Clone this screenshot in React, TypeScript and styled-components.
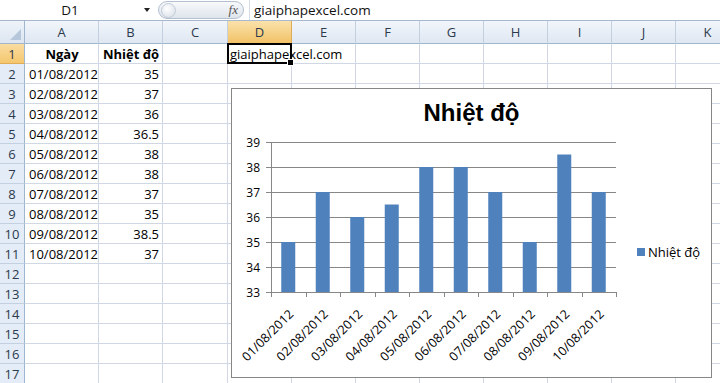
import styled, { createGlobalStyle } from "styled-components";

const GlobalStyle = createGlobalStyle`
  body {
    margin: 0;
    background: #ffffff;
    font-family: "Open Sans", "Liberation Sans", sans-serif;
  }
`;

const Page = styled.div`
  width: 720px;
  height: 383px;
  overflow: hidden;
  position: relative;
  background: #ffffff;
`;

const FormulaBar = styled.div`
  height: 21px;
  box-sizing: border-box;
  border-bottom: 1px solid #a7b8cc;
  display: flex;
  align-items: center;
  background: #ffffff;
`;

const NameBox = styled.div`
  width: 140px;
  text-align: center;
  font-size: 13.5px;
  color: #111;
`;

const NameArrow = styled.div`
  width: 0;
  height: 0;
  margin-left: 4px;
  border-left: 3.5px solid transparent;
  border-right: 3.5px solid transparent;
  border-top: 4px solid #222;
`;

const FxPill = styled.div`
  margin-left: 8px;
  width: 86px;
  height: 18px;
  box-sizing: border-box;
  border: 1px solid #b3c0d0;
  border-radius: 10px;
  background: linear-gradient(#f7f9fb, #dfe5ec);
  display: flex;
  align-items: center;
  justify-content: space-between;
  padding: 0 5px 0 2px;
`;

const PillKnob = styled.div`
  width: 13px;
  height: 13px;
  border-radius: 50%;
  background: radial-gradient(circle at 40% 35%, #ffffff, #d6dde6);
  border: 1px solid #c2ccd8;
`;

const Fx = styled.span`
  font-family: "Liberation Serif", serif;
  font-style: italic;
  font-size: 13px;
  color: #555;
`;

const FormulaText = styled.div`
  margin-left: 5px;
  padding-left: 4px;
  border-left: 1px solid #d5dde7;
  height: 20px;
  line-height: 20px;
  font-size: 13.5px;
  color: #111;
`;

const Sheet = styled.div`
  position: relative;
`;

const Row = styled.div`
  display: flex;
  height: ${(p: { $h: number }) => p.$h}px;
`;

const Corner = styled.div`
  position: relative;
  width: 25px;
  flex: none;
  box-sizing: border-box;
  border-right: 1px solid #9eb6ce;
  border-bottom: 1px solid #9eb6ce;
  background: linear-gradient(#eef3f9, #dde6f1);
  &::after {
    content: "";
    position: absolute;
    right: 3px;
    bottom: 3px;
    border-left: 11px solid transparent;
    border-bottom: 11px solid #b6c7db;
  }
`;

const ColHeader = styled.div<{ $w: number; $active?: boolean }>`
  width: ${(p) => p.$w}px;
  flex: none;
  box-sizing: border-box;
  border-right: 1px solid ${(p) => (p.$active ? "#e0ac55" : "#c3d0e0")};
  border-bottom: 1px solid ${(p) => (p.$active ? "#d9a044" : "#9eb6ce")};
  background: ${(p) =>
    p.$active ? "linear-gradient(#fae2ac, #f2c266)" : "linear-gradient(#f2f6fb, #dfe7f2)"};
  display: flex;
  align-items: center;
  justify-content: center;
  font-size: 13px;
  color: #2b3a4d;
`;

const RowHeader = styled.div<{ $active?: boolean }>`
  width: 25px;
  flex: none;
  box-sizing: border-box;
  border-right: 1px solid #9eb6ce;
  border-bottom: 1px solid ${(p) => (p.$active ? "#e0ac55" : "#c3d0e0")};
  background: ${(p) => (p.$active ? "linear-gradient(#fadca0, #f4c76e)" : "#e4ecf7")};
  display: flex;
  align-items: center;
  justify-content: center;
  font-size: 13px;
  color: #2b3a4d;
`;

const Cell = styled.div<{ $w: number; $align?: string; $bold?: boolean; $selected?: boolean }>`
  position: relative;
  width: ${(p) => p.$w}px;
  flex: none;
  box-sizing: border-box;
  border-right: 1px solid #d0d7e5;
  border-bottom: 1px solid #d0d7e5;
  display: flex;
  align-items: center;
  justify-content: ${(p) => p.$align || "flex-start"};
  padding: 0 3px 0 4px;
  font-size: 13px;
  font-weight: ${(p) => (p.$bold ? 700 : 400)};
  color: #000;
  white-space: nowrap;
  overflow: visible;
  z-index: ${(p) => (p.$selected ? 2 : 1)};
  ${(p) =>
    p.$selected &&
    `
    padding-left: 2px;
    &::after {
      content: "";
      position: absolute;
      left: -1px;
      top: -1px;
      right: -1px;
      bottom: -1px;
      border: 2px solid #000;
      pointer-events: none;
    }
    &::before {
      content: "";
      position: absolute;
      right: -3px;
      bottom: -3px;
      width: 5px;
      height: 5px;
      background: #000;
      border: 1px solid #fff;
      z-index: 3;
    }
  `}
`;

const Chart = styled.div`
  position: absolute;
  left: 231px;
  top: 67px;
  width: 481px;
  height: 290px;
  box-sizing: border-box;
  border: 1px solid #868686;
  background: #ffffff;
  z-index: 5;
  display: flex;
  flex-direction: column;
  font-family: "Open Sans", "Liberation Sans", sans-serif;
`;

const ChartTitle = styled.div`
  height: 44px;
  padding-top: 10px;
  box-sizing: border-box;
  text-align: center;
  font-family: "Liberation Sans", Arial, sans-serif;
  font-size: 24px;
  font-weight: 700;
  line-height: 28px;
  color: #000;
`;

const ChartBody = styled.div`
  flex: 1;
  display: flex;
  align-items: center;
`;

const Legend = styled.div`
  display: flex;
  align-items: center;
  gap: 3px;
  margin-left: 5px;
  padding-bottom: 6px;
  font-size: 13px;
  color: #000;
`;

const LegendKey = styled.div`
  width: 8px;
  height: 8px;
  background: #4f81bd;
`;

const columns = [
  { name: "A", w: 74 },
  { name: "B", w: 64 },
  { name: "C", w: 65 },
  { name: "D", w: 64 },
  { name: "E", w: 64 },
  { name: "F", w: 64 },
  { name: "G", w: 64 },
  { name: "H", w: 64 },
  { name: "I", w: 64 },
  { name: "J", w: 64 },
  { name: "K", w: 64 },
];

const data = [
  { date: "01/08/2012", temp: 35 },
  { date: "02/08/2012", temp: 37 },
  { date: "03/08/2012", temp: 36 },
  { date: "04/08/2012", temp: 36.5 },
  { date: "05/08/2012", temp: 38 },
  { date: "06/08/2012", temp: 38 },
  { date: "07/08/2012", temp: 37 },
  { date: "08/08/2012", temp: 35 },
  { date: "09/08/2012", temp: 38.5 },
  { date: "10/08/2012", temp: 37 },
];

const cellText = (row: number, col: number) => {
  if (row === 1) {
    if (col === 0) return { text: "Ngày", align: "center", bold: true };
    if (col === 1) return { text: "Nhiệt độ", align: "center", bold: true };
    if (col === 3) return { text: "giaiphapexcel.com" };
    return null;
  }
  const d = data[row - 2];
  if (!d) return null;
  if (col === 0) return { text: d.date };
  if (col === 1) return { text: String(d.temp), align: "flex-end" };
  return null;
};

// plot geometry (svg coordinates)
const AX = 39;
const RIGHT = 384;
const TOP = 9;
const UNIT = 25;
const BOTTOM = TOP + UNIT * 6;
const STEP = (RIGHT - AX) / data.length;
const BAR_W = 14;
const yOf = (v: number) => TOP + (39 - v) * UNIT;

const Plot = () => (
  <svg width={400} height={244} viewBox="0 0 400 244">
    {[39, 38, 37, 36, 35, 34, 33].map((v) => (
      <g key={v}>
        <line x1={AX - 5} x2={v === 33 ? AX : RIGHT} y1={yOf(v) + 0.5} y2={yOf(v) + 0.5} stroke="#878787" />
        <text x={28} y={yOf(v) + 4.5} fontSize={12} textAnchor="end" fill="#000">
          {v}
        </text>
      </g>
    ))}
    {data.map((d, i) => {
      const cx = AX + STEP * (i + 0.5);
      const lx = cx + 6;
      const ly = 182;
      return (
        <g key={d.date}>
          <rect x={cx - BAR_W / 2} y={yOf(d.temp)} width={BAR_W} height={BOTTOM - yOf(d.temp)} fill="#4f81bd" />
          <text
            x={lx}
            y={ly}
            fontSize={12.5}
            textAnchor="end"
            fill="#000"
            transform={`rotate(-45 ${lx} ${ly})`}
          >
            {d.date}
          </text>
        </g>
      );
    })}
    <line x1={AX} x2={RIGHT} y1={BOTTOM + 0.5} y2={BOTTOM + 0.5} stroke="#878787" />
    <line x1={AX + 0.5} x2={AX + 0.5} y1={TOP} y2={BOTTOM + 5} stroke="#878787" />
    {Array.from({ length: data.length + 1 }, (_, i) => {
      const x = Math.round(AX + STEP * i) + 0.5;
      return <line key={i} x1={x} x2={x} y1={BOTTOM} y2={BOTTOM + 5} stroke="#878787" />;
    })}
  </svg>
);

export default function App() {
  return (
    <Page>
      <GlobalStyle />
      <FormulaBar>
        <NameBox>D1</NameBox>
        <NameArrow />
        <FxPill>
          <PillKnob />
          <Fx>fx</Fx>
        </FxPill>
        <FormulaText>giaiphapexcel.com</FormulaText>
      </FormulaBar>
      <Sheet>
        <Row $h={23}>
          <Corner />
          {columns.map((c) => (
            <ColHeader key={c.name} $w={c.w} $active={c.name === "D"}>
              {c.name}
            </ColHeader>
          ))}
        </Row>
        {Array.from({ length: 17 }, (_, r) => {
          const row = r + 1;
          return (
            <Row key={row} $h={20}>
              <RowHeader $active={row === 1}>{row}</RowHeader>
              {columns.map((c, ci) => {
                const v = cellText(row, ci);
                return (
                  <Cell
                    key={c.name}
                    $w={c.w}
                    $align={v?.align}
                    $bold={v?.bold}
                    $selected={row === 1 && c.name === "D"}
                  >
                    {v?.text}
                  </Cell>
                );
              })}
            </Row>
          );
        })}
        <Chart>
          <ChartTitle>Nhiệt độ</ChartTitle>
          <ChartBody>
            <Plot />
            <Legend>
              <LegendKey />
              Nhiệt độ
            </Legend>
          </ChartBody>
        </Chart>
      </Sheet>
    </Page>
  );
}
